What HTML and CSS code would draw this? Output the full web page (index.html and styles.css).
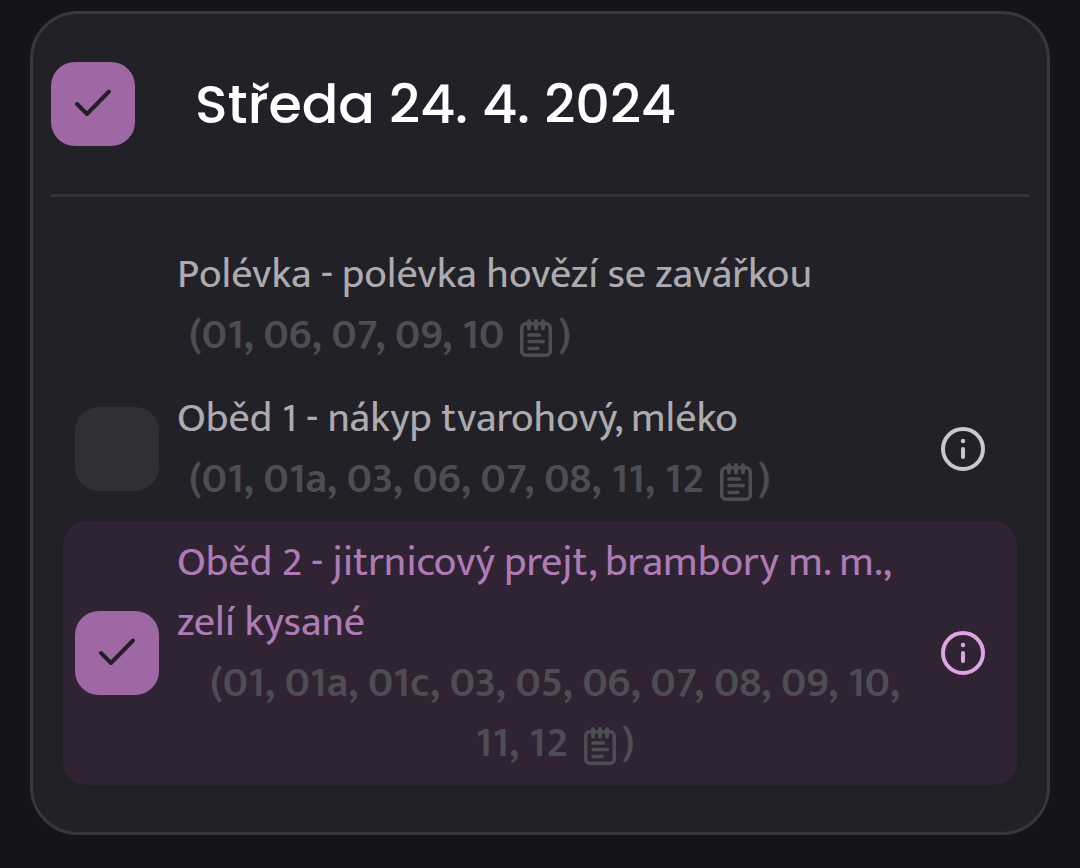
FILE: index.html
```html
<!DOCTYPE html>
<html lang="cs">
<head>
<meta charset="utf-8">
<meta name="viewport" content="width=device-width, initial-scale=1">
<title>Středa 24. 4. 2024</title>
<link rel="stylesheet" href="styles.css">
</head>
<body>
<svg class="sprite" aria-hidden="true">
  <symbol id="tick" viewBox="0 0 84 84"><path d="M26 42 36 52 58 29.500" fill="none" stroke="currentColor" stroke-width="4" stroke-linecap="round" stroke-linejoin="round"/></symbol>
  <symbol id="note" viewBox="0 0 32 40">
    <g fill="none" stroke="currentColor" stroke-width="3.500" stroke-linecap="round">
      <rect x="1.750" y="5.750" width="28.500" height="31.500" rx="4"/>
      <path d="M9 3v7.500M16 3v7.500M23 3v7.500" stroke-width="4"/>
      <path d="M9 17h10.500M9 23.500h14.500M9 30.500h9"/>
    </g>
  </symbol>
  <symbol id="info" viewBox="0 0 44 44"><circle cx="22" cy="22" r="20" fill="none" stroke="currentColor" stroke-width="4"/><circle cx="22" cy="14" r="2.200" fill="currentColor"/><path d="M22 22v8" stroke="currentColor" stroke-width="4" stroke-linecap="round"/></symbol>
</svg>
<main class="card">
  <header class="card-header">
    <span class="check">
      <input type="checkbox" id="day" checked>
      <svg aria-hidden="true"><use href="#tick"/></svg>
    </span>
    <h1><label for="day">Středa 24. 4. 2024</label></h1>
  </header>
  <ul class="meals">
    <li class="meal">
      <div class="meal-text">
        <span class="name">Polévka - polévka hovězí se zavářkou</span>
        <button type="button" class="codes">(01, 06, 07, 09, 10 <svg class="note" aria-hidden="true"><use href="#note"/></svg>)</button>
      </div>
    </li>
    <li class="meal">
      <span class="check">
        <input type="checkbox" id="lunch1">
        <svg aria-hidden="true"><use href="#tick"/></svg>
      </span>
      <div class="meal-text">
        <label class="name" for="lunch1">Oběd 1 - nákyp tvarohový, mléko</label>
        <button type="button" class="codes">(01, 01a, 03, 06, 07, 08, 11, 12 <svg class="note" aria-hidden="true"><use href="#note"/></svg>)</button>
      </div>
      <button type="button" class="info" aria-label="Informace"><svg aria-hidden="true"><use href="#info"/></svg></button>
    </li>
    <li class="meal selected">
      <span class="check">
        <input type="checkbox" id="lunch2" checked>
        <svg aria-hidden="true"><use href="#tick"/></svg>
      </span>
      <div class="meal-text">
        <label class="name" for="lunch2">Oběd 2 - jitrnicový prejt, brambory m. m., zelí kysané</label>
        <button type="button" class="codes">(01, 01a, 01c, 03, 05, 06, 07, 08, 09, 10, 11, 12 <svg class="note" aria-hidden="true"><use href="#note"/></svg>)</button>
      </div>
      <button type="button" class="info" aria-label="Informace"><svg aria-hidden="true"><use href="#info"/></svg></button>
    </li>
  </ul>
</main>
</body>
</html>
```
FILE: styles.css
```css
* { box-sizing: border-box; }

body {
  margin: 0;
  padding: 11px 30px 32px;
  background: #151419;
  color: #adabaf;
  font-family: "Mukta", "Noto Sans", sans-serif;
  font-size: 42px;
  line-height: 60px;
}

.sprite { display: none; }

.card {
  border: 3px solid #38373d;
  border-radius: 48px;
  background: #222127;
  padding: 0 18px 47px;
}

.card-header {
  display: flex;
  align-items: center;
  gap: 60px;
  padding: 48px 0;
  border-bottom: 3px solid #343338;
}

h1 {
  margin: 0;
  color: #fff;
  font-family: "Poppins", "Inter", sans-serif;
  font-size: 54px;
  font-weight: 500;
}

.check {
  display: grid;
  width: 84px;
  height: 84px;
}

.check input,
.check svg {
  grid-area: 1 / 1;
  width: 84px;
  height: 84px;
}

.check input {
  appearance: none;
  margin: 0;
  border-radius: 24px;
  background: #303034;
}

.check input:checked { background: #a067a5; }

.check svg {
  visibility: hidden;
  color: #231f29;
  pointer-events: none;
}

.check input:checked + svg { visibility: visible; }

.meals {
  list-style: none;
  margin: 0;
  padding: 36px 12px 0;
}

.meal {
  display: grid;
  grid-template-columns: 84px 1fr 84px;
  align-items: center;
  padding: 12px;
  border-radius: 24px;
}

.meal.selected {
  background: #302334;
  color: #ae7cb4;
}

.meal-text {
  grid-column: 2;
  display: flex;
  flex-direction: column;
  align-items: flex-start;
  padding-left: 18px;
}

.codes,
.info {
  border: 0;
  padding: 0;
  background: none;
  font: inherit;
}

.codes {
  margin-left: 12px;
  color: #4e4d53;
  font-size: 43px;
  font-weight: 600;
}

.note {
  width: 32px;
  height: 40px;
  margin: 0 6px;
  vertical-align: -10px;
}

.info {
  display: grid;
  place-items: center;
  height: 84px;
  color: #cbc7ca;
}

.info svg {
  width: 44px;
  height: 44px;
}

.selected .info { color: #dda5e3; }
```
